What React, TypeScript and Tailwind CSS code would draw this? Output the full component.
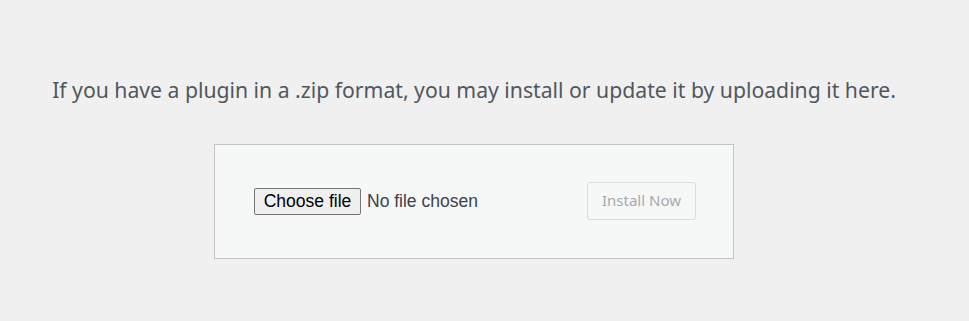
import React from 'react'

const App = () => {
    return (
        <div className="min-h-[321px] w-full bg-[#f0f0f1] pr-[21px] font-['Noto_Sans',sans-serif]">
            <div className="flex flex-col items-center pt-[75px]">
                <p className="text-[21.2px] leading-[30px] text-[#50575e]">
                    If you have a plugin in a .zip format, you may install or update it by uploading it here.
                </p>

                <form className="mt-[39px] flex h-[115px] w-[520px] items-center border border-[#c3c4c7] bg-[#f6f7f7] pl-[39px] pr-[37px]">
                    <div className="flex items-center">
                        <button
                            type="button"
                            className="h-[27px] w-[107px] rounded-[2px] border border-[#767676] bg-[#efefef] font-['Liberation_Sans',sans-serif] text-[17.5px] leading-none text-black"
                        >
                            Choose file
                        </button>
                        <span className="ml-[6px] font-['Liberation_Sans',sans-serif] text-[17.5px] text-[#3c434a]">
                            No file chosen
                        </span>
                    </div>

                    <button
                        type="button"
                        disabled
                        className="ml-auto -mt-[2px] h-[38px] w-[109px] rounded-[3px] border border-[#dcdcde] bg-[#f6f7f7] text-[15px] text-[#a7aaad]"
                    >
                        Install Now
                    </button>
                </form>
            </div>
        </div>
    )
}

export default App
